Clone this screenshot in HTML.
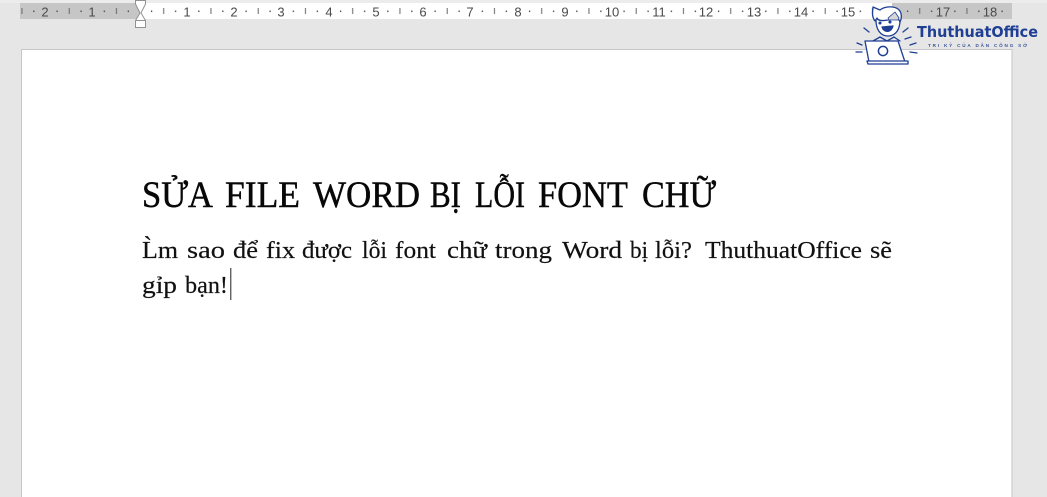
<!DOCTYPE html>
<html lang="vi">
<head>
<meta charset="utf-8">
<title>Sửa file Word bị lỗi font chữ</title>
<style>
html,body{margin:0;padding:0;background:#e6e6e6;}
body{width:1047px;height:497px;overflow:hidden;position:relative;}
svg{position:absolute;left:0;top:0;}
.h{font-family:"Liberation Serif",serif;font-size:36.5px;fill:#080808;stroke:#080808;stroke-width:.45px;}
.b{font-family:"Liberation Serif",serif;font-size:24px;fill:#111;stroke:#111;stroke-width:.18px;}
.r{font-family:"Liberation Sans",sans-serif;font-size:13px;fill:#4a4a4a;text-anchor:middle;}
</style>
</head>
<body>
<svg width="1047" height="497" viewBox="0 0 1047 497" xmlns="http://www.w3.org/2000/svg">
<defs>
<pattern id="t" x="140" y="3" width="47.25" height="16" patternUnits="userSpaceOnUse">
<rect x="11" y="7.5" width="1.2" height="1.6" fill="#444"/>
<rect x="23.2" y="5" width="1" height="6" fill="#666"/>
<rect x="35" y="7.5" width="1.2" height="1.6" fill="#444"/>
</pattern>
</defs>
<rect width="1047" height="497" fill="#e6e6e6"/>
<rect x="0" y="0" width="1047" height="3" fill="#ececec"/>
<rect x="20" y="3" width="120" height="16" fill="#c6c6c6"/>
<rect x="140" y="3" width="752" height="16" fill="#fff"/>
<rect x="892" y="3" width="120" height="16" fill="#c6c6c6"/>
<rect x="20" y="3" width="992" height="16" fill="url(#t)"/>
<g class="r">
<text x="45" y="16.5">2</text><text x="92" y="16.5">1</text>
<text x="187" y="16.5">1</text><text x="234" y="16.5">2</text><text x="281" y="16.5">3</text><text x="329" y="16.5">4</text>
<text x="376" y="16.5">5</text><text x="423" y="16.5">6</text><text x="470" y="16.5">7</text><text x="518" y="16.5">8</text>
<text x="565" y="16.5">9</text><text x="612" y="16.5">10</text><text x="659" y="16.5">11</text><text x="706" y="16.5">12</text>
<text x="754" y="16.5">13</text><text x="801" y="16.5">14</text><text x="848" y="16.5">15</text>
<text x="943" y="16.5">17</text><text x="990" y="16.5">18</text>
</g>
<rect x="21.5" y="49.5" width="990.5" height="460" fill="#fff" stroke="#c6c6c6"/>
<path d="M135.5 .5H145.5V4L141 13L145.5 20.5V27.5H135.5V20.5L140 13L135.5 4Z" fill="#fff" stroke="#929292"/>
<path d="M135.5 20.5H145.5" fill="none" stroke="#929292"/>

<text class="h" x="142" y="207" textLength="71" lengthAdjust="spacingAndGlyphs">SỬA</text>
<text class="h" x="225" y="207" textLength="75" lengthAdjust="spacingAndGlyphs">FILE</text>
<text class="h" x="313" y="207" textLength="107" lengthAdjust="spacingAndGlyphs">WORD</text>
<text class="h" x="430" y="207" textLength="31" lengthAdjust="spacingAndGlyphs">BỊ</text>
<text class="h" x="475" y="207" textLength="50" lengthAdjust="spacingAndGlyphs">LỖI</text>
<text class="h" x="538" y="207" textLength="90" lengthAdjust="spacingAndGlyphs">FONT</text>
<text class="h" x="642" y="207" textLength="74" lengthAdjust="spacingAndGlyphs">CHỮ</text>

<text class="b" x="142" y="258" textLength="36" lengthAdjust="spacingAndGlyphs">L̀m</text>
<text class="b" x="187" y="258" textLength="38" lengthAdjust="spacingAndGlyphs">sao</text>
<text class="b" x="233" y="258" textLength="25" lengthAdjust="spacingAndGlyphs">để</text>
<text class="b" x="266" y="258" textLength="29" lengthAdjust="spacingAndGlyphs">fix</text>
<text class="b" x="302" y="258" textLength="50" lengthAdjust="spacingAndGlyphs">được</text>
<text class="b" x="362" y="258" textLength="25" lengthAdjust="spacingAndGlyphs">lỗi</text>
<text class="b" x="395" y="258" textLength="41" lengthAdjust="spacingAndGlyphs">font</text>
<text class="b" x="447" y="258" textLength="40" lengthAdjust="spacingAndGlyphs">chữ</text>
<text class="b" x="495" y="258" textLength="57" lengthAdjust="spacingAndGlyphs">trong</text>
<text class="b" x="562" y="258" textLength="60" lengthAdjust="spacingAndGlyphs">Word</text>
<text class="b" x="630" y="258" textLength="18" lengthAdjust="spacingAndGlyphs">bị</text>
<text class="b" x="655" y="258" textLength="37" lengthAdjust="spacingAndGlyphs">lỗi?</text>
<text class="b" x="705" y="258" textLength="157" lengthAdjust="spacingAndGlyphs">ThuthuatOffice</text>
<text class="b" x="870" y="258" textLength="22" lengthAdjust="spacingAndGlyphs">sẽ</text>
<text class="b" x="142" y="293" textLength="35" lengthAdjust="spacingAndGlyphs">gỉp</text>
<text class="b" x="185" y="293" textLength="43" lengthAdjust="spacingAndGlyphs">bạn!</text>
<rect x="230.3" y="268" width="1" height="32" fill="#222"/>

<g fill="none" stroke="#1f3f94" stroke-width="1.3" stroke-linecap="round" stroke-linejoin="round">
<path d="M876 20C876 29 880 36 888 36C896 36 900 29 900 20" fill="#fff"/>
<path d="M875 21C871 16 873 11 873 7L880 10C885 6 894 6 898 9C902 12 902 18 900 22L898 18L888 20C882 21 878 21 877 18Z" fill="#fff"/>
<path d="M888 18L895 12L899 18L898 20L889 20Z" fill="#d6d6d6" stroke-width=".8"/>
<path d="M882 27C884 33 891 33 893 26Z" fill="#1f3f94"/>
<circle cx="880" cy="23" r=".9" fill="#1f3f94"/><circle cx="890" cy="22" r=".9" fill="#1f3f94"/>
<path d="M873 41L880 37L887 41L894 37L900 41"/>
<path d="M865 41H898L905 62H869Z" fill="#fff"/>
<circle cx="883" cy="51" r="4.6" stroke-width="1.5"/>
<path d="M867 61H908V64H868Z" fill="#fff"/>
<path d="M864 28L869 32M857 43L862 45M856 52L862 52M908 28L903 32M911 37L905 39M916 43L910 45M910 52L917 53"/>
</g>
<text x="917" y="37" font-family="'DejaVu Sans',sans-serif" font-weight="700" font-size="15.5" fill="#1f3f94" textLength="121" lengthAdjust="spacingAndGlyphs">ThuthuatOffice</text>
<text x="928" y="47" font-family="'Liberation Sans',sans-serif" font-weight="700" font-size="4.6" fill="#3a5599" textLength="99">TRI KỶ CỦA DÂN CÔNG SỞ</text>
</svg>
</body>
</html>
